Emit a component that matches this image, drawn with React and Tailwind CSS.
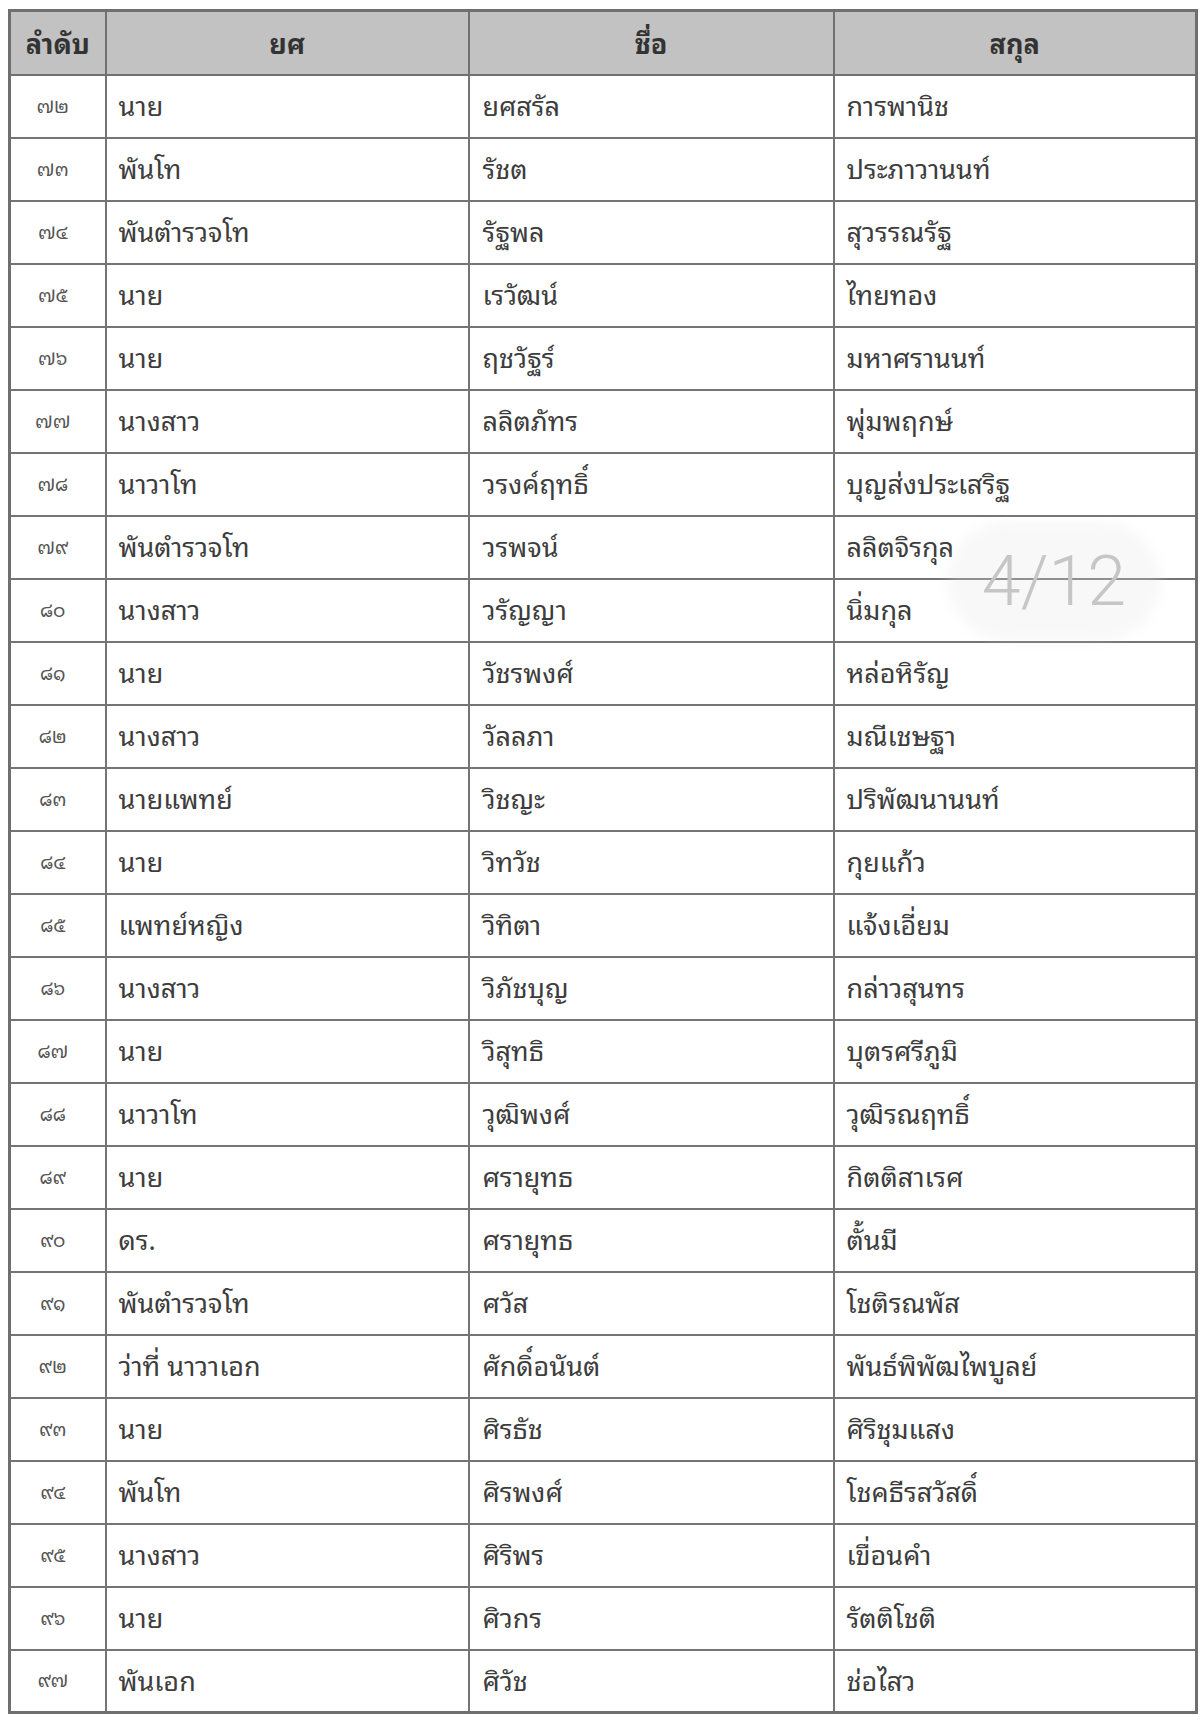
import React from "react";

const rows = [
  ["๗๒", "นาย", "ยศสรัล", "การพานิช"],
  ["๗๓", "พันโท", "รัชต", "ประภาวานนท์"],
  ["๗๔", "พันตำรวจโท", "รัฐพล", "สุวรรณรัฐ"],
  ["๗๕", "นาย", "เรวัฒน์", "ไทยทอง"],
  ["๗๖", "นาย", "ฤชวัฐร์", "มหาศรานนท์"],
  ["๗๗", "นางสาว", "ลลิตภัทร", "พุ่มพฤกษ์"],
  ["๗๘", "นาวาโท", "วรงค์ฤทธิ์", "บุญส่งประเสริฐ"],
  ["๗๙", "พันตำรวจโท", "วรพจน์", "ลลิตจิรกุล"],
  ["๘๐", "นางสาว", "วรัญญา", "นิ่มกุล"],
  ["๘๑", "นาย", "วัชรพงศ์", "หล่อหิรัญ"],
  ["๘๒", "นางสาว", "วัลลภา", "มณีเชษฐา"],
  ["๘๓", "นายแพทย์", "วิชญะ", "ปริพัฒนานนท์"],
  ["๘๔", "นาย", "วิทวัช", "กุยแก้ว"],
  ["๘๕", "แพทย์หญิง", "วิทิตา", "แจ้งเอี่ยม"],
  ["๘๖", "นางสาว", "วิภัชบุญ", "กล่าวสุนทร"],
  ["๘๗", "นาย", "วิสุทธิ", "บุตรศรีภูมิ"],
  ["๘๘", "นาวาโท", "วุฒิพงศ์", "วุฒิรณฤทธิ์"],
  ["๘๙", "นาย", "ศรายุทธ", "กิตติสาเรศ"],
  ["๙๐", "ดร.", "ศรายุทธ", "ตั้นมี"],
  ["๙๑", "พันตำรวจโท", "ศวัส", "โชติรณพัส"],
  ["๙๒", "ว่าที่ นาวาเอก", "ศักดิ์อนันต์", "พันธ์พิพัฒไพบูลย์"],
  ["๙๓", "นาย", "ศิรธัช", "ศิริชุมแสง"],
  ["๙๔", "พันโท", "ศิรพงศ์", "โชคธีรสวัสดิ์"],
  ["๙๕", "นางสาว", "ศิริพร", "เขื่อนคำ"],
  ["๙๖", "นาย", "ศิวกร", "รัตติโชติ"],
  ["๙๗", "พันเอก", "ศิวัช", "ช่อไสว"],
];

const thai = {
  fontFamily: '"Noto Sans Thai Looped", "Noto Sans Thai", "Noto Sans", sans-serif',
};

export default function App() {
  return (
    <div className="w-[1200px] h-[1721px] bg-white pt-[9px] pl-[8px]">
      <div className="relative w-[1187px]" style={thai}>
        <table className="w-[1187px] border-collapse table-fixed border-[3px] border-[#6f6f6f] text-[#3d3d3d]">
          <colgroup>
            <col className="w-[96px]" />
            <col className="w-[363px]" />
            <col className="w-[365px]" />
            <col className="w-[363px]" />
          </colgroup>
          <thead>
            <tr className="h-[64px] bg-[#c2c2c2]">
              <th className="border-2 border-[#707070] text-[27px] font-bold text-center text-[#333] leading-none pb-[3px]">ลำดับ</th>
              <th className="border-2 border-[#707070] text-[27px] font-bold text-center text-[#333] leading-none pb-[3px]">ยศ</th>
              <th className="border-2 border-[#707070] text-[27px] font-bold text-center text-[#333] leading-none pb-[3px]">ชื่อ</th>
              <th className="border-2 border-[#707070] text-[27px] font-bold text-center text-[#333] leading-none pb-[3px]">สกุล</th>
            </tr>
          </thead>
          <tbody>
            {rows.map((r) => (
              <tr key={r[0]} className="h-[63px]">
                <td className="border-2 border-[#747474] text-center pr-[10px] pb-[4px] text-[19px] text-[#555] leading-none">{r[0]}</td>
                <td className="border-2 border-[#747474] pl-[12px] pb-[5px] text-[27px] leading-none">{r[1]}</td>
                <td className="border-2 border-[#747474] pl-[13px] pb-[5px] text-[27px] leading-none">{r[2]}</td>
                <td className="border-2 border-[#747474] pl-[12px] pb-[5px] text-[27px] leading-none">{r[3]}</td>
              </tr>
            ))}
          </tbody>
        </table>
        <div className="absolute left-[940px] top-[513px] w-[212px] h-[118px] rounded-full bg-[rgba(228,228,228,0.25)] blur-[6px]" />
        <div
          className="absolute left-[940px] top-[513px] w-[212px] h-[118px] flex items-center justify-center text-[70px] font-light text-[#c6c6c6] leading-none"
          style={{ fontFamily: 'Roboto, "Liberation Sans", sans-serif' }}
        >
          4/12
        </div>
      </div>
    </div>
  );
}
